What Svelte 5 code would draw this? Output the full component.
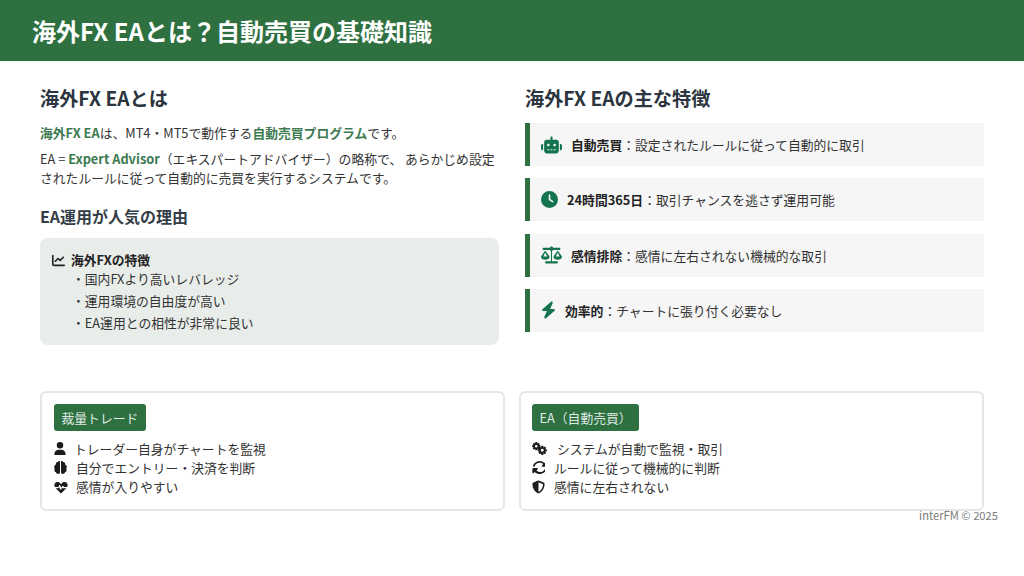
<script>
  const features = [
    { icon: 'robot', title: '自動売買', text: '設定されたルールに従って自動的に取引' },
    { icon: 'clock', title: '24時間365日', text: '取引チャンスを逃さず運用可能' },
    { icon: 'scale', title: '感情排除', text: '感情に左右されない機械的な取引' },
    { icon: 'bolt', title: '効率的', text: 'チャートに張り付く必要なし' }
  ];
  const reasons = ['国内FXより高いレバレッジ', '運用環境の自由度が高い', 'EA運用との相性が非常に良い'];
  const manual = [
    { icon: 'user', text: 'トレーダー自身がチャートを監視' },
    { icon: 'brain', text: '自分でエントリー・決済を判断' },
    { icon: 'heart', text: '感情が入りやすい' }
  ];
  const auto = [
    { icon: 'cogs', text: 'システムが自動で監視・取引' },
    { icon: 'sync', text: 'ルールに従って機械的に判断' },
    { icon: 'shield', text: '感情に左右されない' }
  ];

  // 8-tooth gear with a round hole, for the cogs icon
  function gear(cx, cy, outer, inner, hole) {
    let d = '';
    for (let i = 0; i < 8; i++) {
      const a = (i * Math.PI) / 4;
      const pts = [
        [inner, a - 0.36],
        [outer, a - 0.22],
        [outer, a + 0.22],
        [inner, a + 0.36]
      ];
      for (const [r, t] of pts) {
        d += (d ? 'L' : 'M') + (cx + r * Math.cos(t)).toFixed(2) + ' ' + (cy + r * Math.sin(t)).toFixed(2);
      }
    }
    d += `ZM${cx + hole} ${cy}a${hole} ${hole} 0 1 0 ${-2 * hole} 0a${hole} ${hole} 0 1 0 ${2 * hole} 0Z`;
    return d;
  }
</script>

{#snippet icon(name)}
  {#if name === 'robot'}
    <svg class="ic robot" viewBox="0 0 640 512"><path d="M320 0c18 0 32 14 32 32v64h112c44 0 80 36 80 80v256c0 44-36 80-80 80H176c-44 0-80-36-80-80V176c0-44 36-80 80-80h112V32c0-18 14-32 32-32zM208 384c-9 0-16 7-16 16s7 16 16 16h32c9 0 16-7 16-16s-7-16-16-16h-32zm96 0c-9 0-16 7-16 16s7 16 16 16h32c9 0 16-7 16-16s-7-16-16-16h-32zm96 0c-9 0-16 7-16 16s7 16 16 16h32c9 0 16-7 16-16s-7-16-16-16h-32zM264 256a40 40 0 1 0-80 0 40 40 0 1 0 80 0zm152 40a40 40 0 1 0 0-80 40 40 0 1 0 0 80zM48 224h16v192H48c-27 0-48-21-48-48v-96c0-27 21-48 48-48zm544 0c27 0 48 21 48 48v96c0 27-21 48-48 48h-16V224h16z"/></svg>
  {:else if name === 'clock'}
    <svg class="ic clock" viewBox="0 0 512 512"><path d="M256 0a256 256 0 1 1 0 512A256 256 0 1 1 256 0zM232 120V256c0 8 4 15.5 10.7 20l96 64c11 7.4 25.9 4.4 33.3-6.7s4.4-25.9-6.7-33.3L280 243.2V120c0-13.3-10.7-24-24-24s-24 10.7-24 24z"/></svg>
  {:else if name === 'scale'}
    <svg class="ic scale" viewBox="0 0 640 512"><path fill-rule="evenodd" d="M320 0c24 0 44 16 50 38h190c18 0 32 14 32 32s-14 32-32 32H366c-6 14-16 25-30 31v315h150c18 0 32 14 32 32s-14 32-32 32H154c-18 0-32-14-32-32s14-32 32-32h150V133c-14-6-24-17-30-31H80c-18 0-32-14-32-32s14-32 32-32h190c6-22 26-38 50-38zM130 178L72 300h116l-58-122zM0 312c0-6 2-12 5-17l103-148c10-14 34-14 44 0l103 148c3 5 5 11 5 17 0 50-58 92-130 92S0 362 0 312zm510-134l-58 122h116l-58-122zm-130 134c0-6 2-12 5-17l103-148c10-14 34-14 44 0l103 148c3 5 5 11 5 17 0 50-58 92-130 92s-130-42-130-92z"/></svg>
  {:else if name === 'bolt'}
    <svg class="ic bolt" viewBox="0 0 448 512"><path d="M349.4 44.6c5.9-13.7 1.5-29.7-10.6-38.5s-28.6-8-39.9 1.8l-256 224c-10 8.8-13.6 22.9-8.9 35.3S50.7 288 64 288H175.5L98.6 467.4c-5.9 13.7-1.5 29.7 10.6 38.5s28.6 8 39.9-1.8l256-224c10-8.8 13.6-22.9 8.9-35.3s-16.6-20.7-30-20.7H272.5L349.4 44.6z"/></svg>
  {:else if name === 'user'}
    <svg class="ic small user" viewBox="0 0 448 512"><path d="M224 256A128 128 0 1 0 224 0a128 128 0 1 0 0 256zm-45.7 48C79.8 304 0 383.8 0 482.3C0 498.7 13.3 512 29.7 512H418.3c16.4 0 29.7-13.3 29.7-29.7C448 383.8 368.2 304 269.7 304H178.3z"/></svg>
  {:else if name === 'brain'}
    <svg class="ic small brain" viewBox="0 0 512 512"><path d="M236 20c0-12-10-20-24-20-30 0-54 18-64 44-44 2-78 34-78 72 0 8 1 14 3 20C37 150 6 188 6 236c0 30 10 56 26 74-12 16-18 34-18 54 0 40 28 72 64 80 8 36 46 68 90 68 38 0 68-24 68-56V20zm40 0c0-12 10-20 24-20 30 0 54 18 64 44 44 2 78 34 78 72 0 8-1 14-3 20 36 14 67 52 67 100 0 30-10 56-26 74 12 16 18 34 18 54 0 40-28 72-64 80-8 36-46 68-90 68-38 0-68-24-68-56V20z"/></svg>
  {:else if name === 'heart'}
    <svg class="ic small heart" viewBox="0 0 512 440"><path d="M256 436L60 246h98l24-46 50 96c5 10 20 11 26 1l40-71 14 20h140L256 436zM34 206C-4 146 12 56 80 28c52-22 110-6 146 38l30 34 30-34c36-44 94-60 146-38 68 28 84 118 46 178H368l-30-42c-7-10-22-9-28 1l-38 68-50-96c-6-11-22-11-28 0l-36 69H34z"/></svg>
  {:else if name === 'cogs'}
    <svg class="ic small cogs" viewBox="0 0 16 14"><path fill-rule="evenodd" d={gear(4.5, 4.5, 4.5, 3.3, 1.4)}/><path fill-rule="evenodd" d={gear(11, 9, 5, 3.7, 1.6)}/></svg>
  {:else if name === 'sync'}
    <svg class="ic small sync" viewBox="0 0 512 512"><path d="M105 204c10-28 26-54 48-76 80-80 208-80 288-2l-45 45c-9 9-12 23-7 35s17 20 30 20h128c18 0 32-14 32-32V66c0-13-8-25-20-30s-26-2-35 7l-40 40C397-27 218-27 108 83 77 114 55 151 41 190c-6 17 3 35 20 41s36-3 42-20l2-7zM39 289c-5 2-10 5-14 9-4 4-7 8-9 13-2 5-2 11-2 17v118c0 13 8 25 20 30s26 2 35-7l40-40c110 109 289 109 399-1 31-31 53-68 67-107 6-17-3-35-20-41s-36 3-42 20c-10 28-26 54-48 76-80 80-208 80-288 2l45-45c9-9 12-23 7-35s-17-20-30-20H48c-3 0-6 0-9 1z"/></svg>
  {:else if name === 'shield'}
    <svg class="ic small shield" viewBox="0 0 512 512"><path fill-rule="evenodd" d="M256 0c5 0 9 1 13 3l188 80c22 9 38 31 38 56-1 99-42 280-214 362-16 8-35 8-51 0C58 419 17 238 17 139c0-25 16-47 38-56L243 3c4-2 8-3 13-3zm0 67v378c138-67 175-214 176-302L256 67z"/></svg>
  {/if}
{/snippet}

<div class="slide">
  <header class="top">
    <h1>海外FX EAとは？自動売買の基礎知識</h1>
  </header>

  <main class="columns">
    <section class="col">
      <h2>海外FX EAとは</h2>
      <p><b>海外FX EA</b>は、MT4・MT5で動作する<b>自動売買プログラム</b>です。</p>
      <p>EA = <b>Expert Advisor</b>（エキスパートアドバイザー）の略称で、 あらかじめ設定されたルールに従って自動的に売買を実行するシステムです。</p>
      <h3>EA運用が人気の理由</h3>
      <div class="reason-box">
        <div class="reason-head">
          <svg class="chart" viewBox="0 0 512 512"><path d="M64 64c0-17.7-14.3-32-32-32S0 46.3 0 64V400c0 44.2 35.8 80 80 80H480c17.7 0 32-14.3 32-32s-14.3-32-32-32H80c-8.8 0-16-7.2-16-16V64zm406.6 86.6c12.5-12.5 12.5-32.8 0-45.3s-32.8-12.5-45.3 0L320 210.7l-57.4-57.4c-12.5-12.5-32.8-12.5-45.3 0l-112 112c-12.5 12.5-12.5 32.8 0 45.3s32.8 12.5 45.3 0L240 221.3l57.4 57.4c12.5 12.5 32.8 12.5 45.3 0l128-128z"/></svg>
          <strong>海外FXの特徴</strong>
        </div>
        <ul>
          {#each reasons as r}
            <li>・{r}</li>
          {/each}
        </ul>
      </div>
    </section>

    <section class="col">
      <h2>海外FX EAの主な特徴</h2>
      <div class="features">
        {#each features as f}
          <div class="feature">
            {@render icon(f.icon)}
            <span><strong>{f.title}</strong>：{f.text}</span>
          </div>
        {/each}
      </div>
    </section>
  </main>

  <div class="compare">
    <div class="card">
      <span class="tag">裁量トレード</span>
      {#each manual as m}
        <div class="row">{@render icon(m.icon)}<span>{m.text}</span></div>
      {/each}
    </div>
    <div class="card">
      <span class="tag">EA（自動売買）</span>
      {#each auto as m}
        <div class="row">{@render icon(m.icon)}<span>{m.text}</span></div>
      {/each}
    </div>
  </div>
  <div class="copy">interFM © 2025</div>
</div>

<style>
  :global(body) {
    margin: 0;
    background: #fff;
  }

  .slide {
    width: 1024px;
    height: 576px;
    overflow: hidden;
    font-family: "Noto Sans CJK JP", "Noto Sans", sans-serif;
    color: #333;
    display: flex;
    flex-direction: column;
  }

  .top {
    height: 61px;
    background: #2e7040;
    padding-left: 32px;
    display: flex;
    align-items: center;
    flex-shrink: 0;
  }

  h1 {
    margin: 0;
    font-size: 24px;
    font-weight: 700;
    color: #fff;
    line-height: 1;
  }

  .columns {
    display: flex;
    gap: 26px;
    padding: 24px 40px 0;
    height: 306px;
    box-sizing: border-box;
  }

  .col {
    width: 459px;
  }

  h2 {
    margin: 0 0 11px;
    font-size: 19.2px;
    line-height: 27px;
    font-weight: 700;
    color: #2c3540;
  }

  h3 {
    margin: 18px 0 11px;
    font-size: 16px;
    line-height: 22px;
    font-weight: 700;
    color: #333d47;
  }

  p {
    margin: 0 0 6.4px;
    font-size: 12.8px;
    line-height: 19.2px;
  }

  p b {
    color: #3d7a50;
    font-weight: 700;
  }

  .reason-box {
    background: #e9edea;
    border-radius: 8px;
    height: 107px;
    padding: 13px 12px;
    box-sizing: border-box;
  }

  .reason-head {
    display: flex;
    align-items: center;
    gap: 6px;
    font-size: 12.8px;
    line-height: 18px;
    color: #222;
  }

  .chart {
    width: 13px;
    height: 13px;
    fill: #222;
  }

  ul {
    list-style: none;
    margin: -1px 0 0;
    padding: 0 0 0 20px;
    font-size: 12.8px;
  }

  li {
    line-height: 22px;
  }

  .features {
    display: flex;
    flex-direction: column;
    gap: 12.3px;
  }

  .feature {
    height: 43px;
    box-sizing: border-box;
    background: #f6f6f6;
    border-left: 5px solid #2e7040;
    padding-left: 11px;
    display: flex;
    align-items: center;
    gap: 9px;
    font-size: 12.8px;
  }

  .feature strong {
    color: #222;
  }

  .ic {
    fill: #14744f;
    height: 18px;
    flex-shrink: 0;
  }

  .robot, .scale {
    width: 21px;
  }

  .clock {
    width: 17px;
    height: 17px;
  }

  .bolt {
    width: 15px;
  }

  .compare {
    display: flex;
    gap: 14px;
    padding: 24px 40px 0;
  }

  .card {
    flex: 0 0 465px;
    height: 120px;
    box-sizing: border-box;
    border: 2px solid #e6e6e6;
    border-radius: 6px;
    padding: 11px 12px 0;
    font-size: 12.8px;
    line-height: 19.2px;
  }

  .card + .card {
    padding-left: 11px;
  }

  .tag {
    display: block;
    width: fit-content;
    background: #2e7040;
    color: #dfe9e2;
    border-radius: 3px;
    padding: 0 7.5px;
    line-height: 27px;
    margin-bottom: 8px;
  }

  .row {
    display: flex;
    align-items: center;
    gap: 10px;
  }

  .ic.small {
    fill: #1c1c1c;
    width: 12px;
    height: 13px;
  }

  .ic.user {
    margin-right: -2px;
  }

  .ic.brain {
    width: 13px;
    margin-right: -1px;
  }

  .ic.heart {
    width: 14px;
    margin-right: -2px;
  }

  .ic.cogs {
    width: 15px;
    height: 13px;
  }

  .ic.sync {
    width: 13px;
    margin-right: -1px;
  }

  .ic.shield {
    width: 13px;
    height: 14px;
    margin-right: -1px;
  }

  .copy {
    text-align: right;
    padding-right: 26px;
    font-size: 11.2px;
    line-height: 14px;
    margin-top: -3px;
    color: #7b7b7b;
  }
</style>
